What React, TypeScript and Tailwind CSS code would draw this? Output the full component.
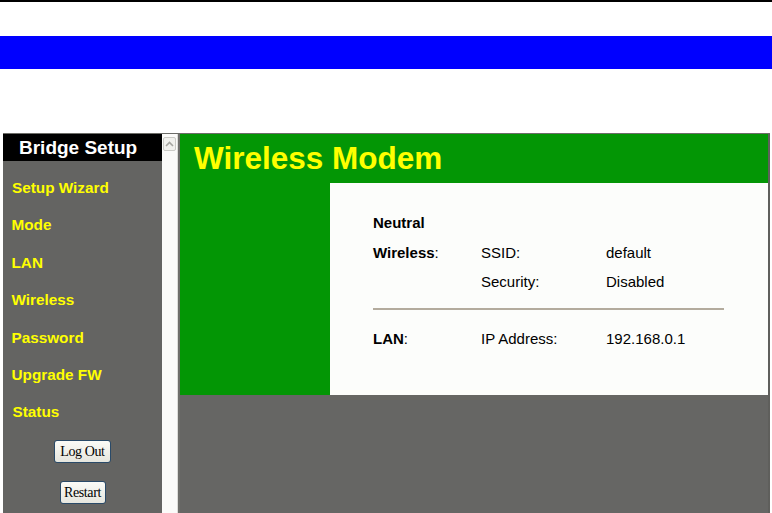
import React from "react";

const navItems: { label: string; cls: string }[] = [
  { label: "Setup Wizard", cls: "pl-[9px]" },
  { label: "Mode", cls: "pl-[8.5px]" },
  { label: "LAN", cls: "pl-[8.5px]" },
  { label: "Wireless", cls: "pl-[8.5px]" },
  { label: "Password", cls: "pl-[8.5px]" },
  { label: "Upgrade FW", cls: "pl-[8.5px]" },
  { label: "Status", cls: "pl-[9.5px]" },
];

function Btn({ label, w }: { label: string; w: string }) {
  return (
    <div
      className={`${w} h-[23px] flex items-center justify-center rounded-[3px] border border-[#2a4a68] bg-gradient-to-b from-[#fbfbf7] to-[#e6e6de] text-black text-[14px] tracking-[-0.4px] font-['Liberation_Serif','Times_New_Roman',serif]`}
    >
      {label}
    </div>
  );
}

export default function App() {
  return (
    <div className="w-[772px] h-[513px] overflow-hidden bg-white font-['Liberation_Sans',Arial,sans-serif]">
      <div className="h-[2px] bg-black" />
      <div className="h-[34px]" />
      <div className="h-[33px] bg-[#0000ff]" />
      <div className="h-[64px]" />
      <div className="flex ml-[3px] w-[767px] h-[380px] border-t border-[#6c6c68]">
        {/* left nav */}
        <div className="w-[159px] bg-[#646462] flex flex-col">
          <div className="h-[27px] bg-black flex items-center pl-[16px] text-white font-bold text-[19px] leading-none">
            Bridge Setup
          </div>
          <div className="pt-[8px] flex flex-col">
            {navItems.map((n) => (
              <div
                key={n.label}
                className={`h-[37.4px] flex items-center ${n.cls} text-[#ffff00] font-bold text-[15.3px] leading-none`}
              >
                {n.label}
              </div>
            ))}
          </div>
          <div className="flex flex-col items-center mt-[9px] gap-[18px]">
            <Btn label="Log Out" w="w-[57px]" />
            <Btn label="Restart" w="w-[46px]" />
          </div>
        </div>
        {/* scrollbar */}
        <div className="w-[15px] bg-[#fbfbf9] flex flex-col items-center">
          <div className="mt-[3px] w-[13px] h-[14px] rounded-[2px] border border-[#cbcbc6] bg-[#f1f1ed] flex items-center justify-center">
            <svg width="9" height="6" viewBox="0 0 9 6">
              <path d="M1 5 L4.5 1.5 L8 5" fill="none" stroke="#a5a5a0" strokeWidth="1.6" />
            </svg>
          </div>
        </div>
        <div className="w-[1px] bg-[#dcdcd8]" />
        <div className="w-[2px] bg-[#6e6e6a]" />
        {/* right frame */}
        <div className="w-[588px] flex flex-col bg-[#666664]">
          <div className="h-[49px] bg-[#039605] flex items-center pl-[14px] text-[#ffff00] font-bold text-[31.5px] leading-none">
            Wireless Modem
          </div>
          <div className="h-[212px] flex">
            <div className="w-[150px] bg-[#039605]" />
            <div className="flex-1 bg-[#fcfdfb] pl-[43px] pt-[24px] text-[15px] text-black leading-none">
              <div className="h-[30px] flex items-center font-bold">Neutral</div>
              <div className="h-[30px] flex items-center">
                <div className="w-[108px]">
                  <span className="font-bold">Wireless</span>:
                </div>
                <div className="w-[125px]">SSID:</div>
                <div>default</div>
              </div>
              <div className="h-[29px] flex items-center">
                <div className="w-[108px]" />
                <div className="w-[125px]">Security:</div>
                <div>Disabled</div>
              </div>
              <div className="mt-[12px] w-[351px] h-[2px] bg-[#b3ab9d]" />
              <div className="mt-[13px] h-[30px] flex items-center">
                <div className="w-[108px]">
                  <span className="font-bold">LAN</span>:
                </div>
                <div className="w-[125px]">IP Address:</div>
                <div>192.168.0.1</div>
              </div>
            </div>
          </div>
        </div>
        <div className="w-[2px] bg-[#5f5f5c]" />
      </div>
    </div>
  );
}
